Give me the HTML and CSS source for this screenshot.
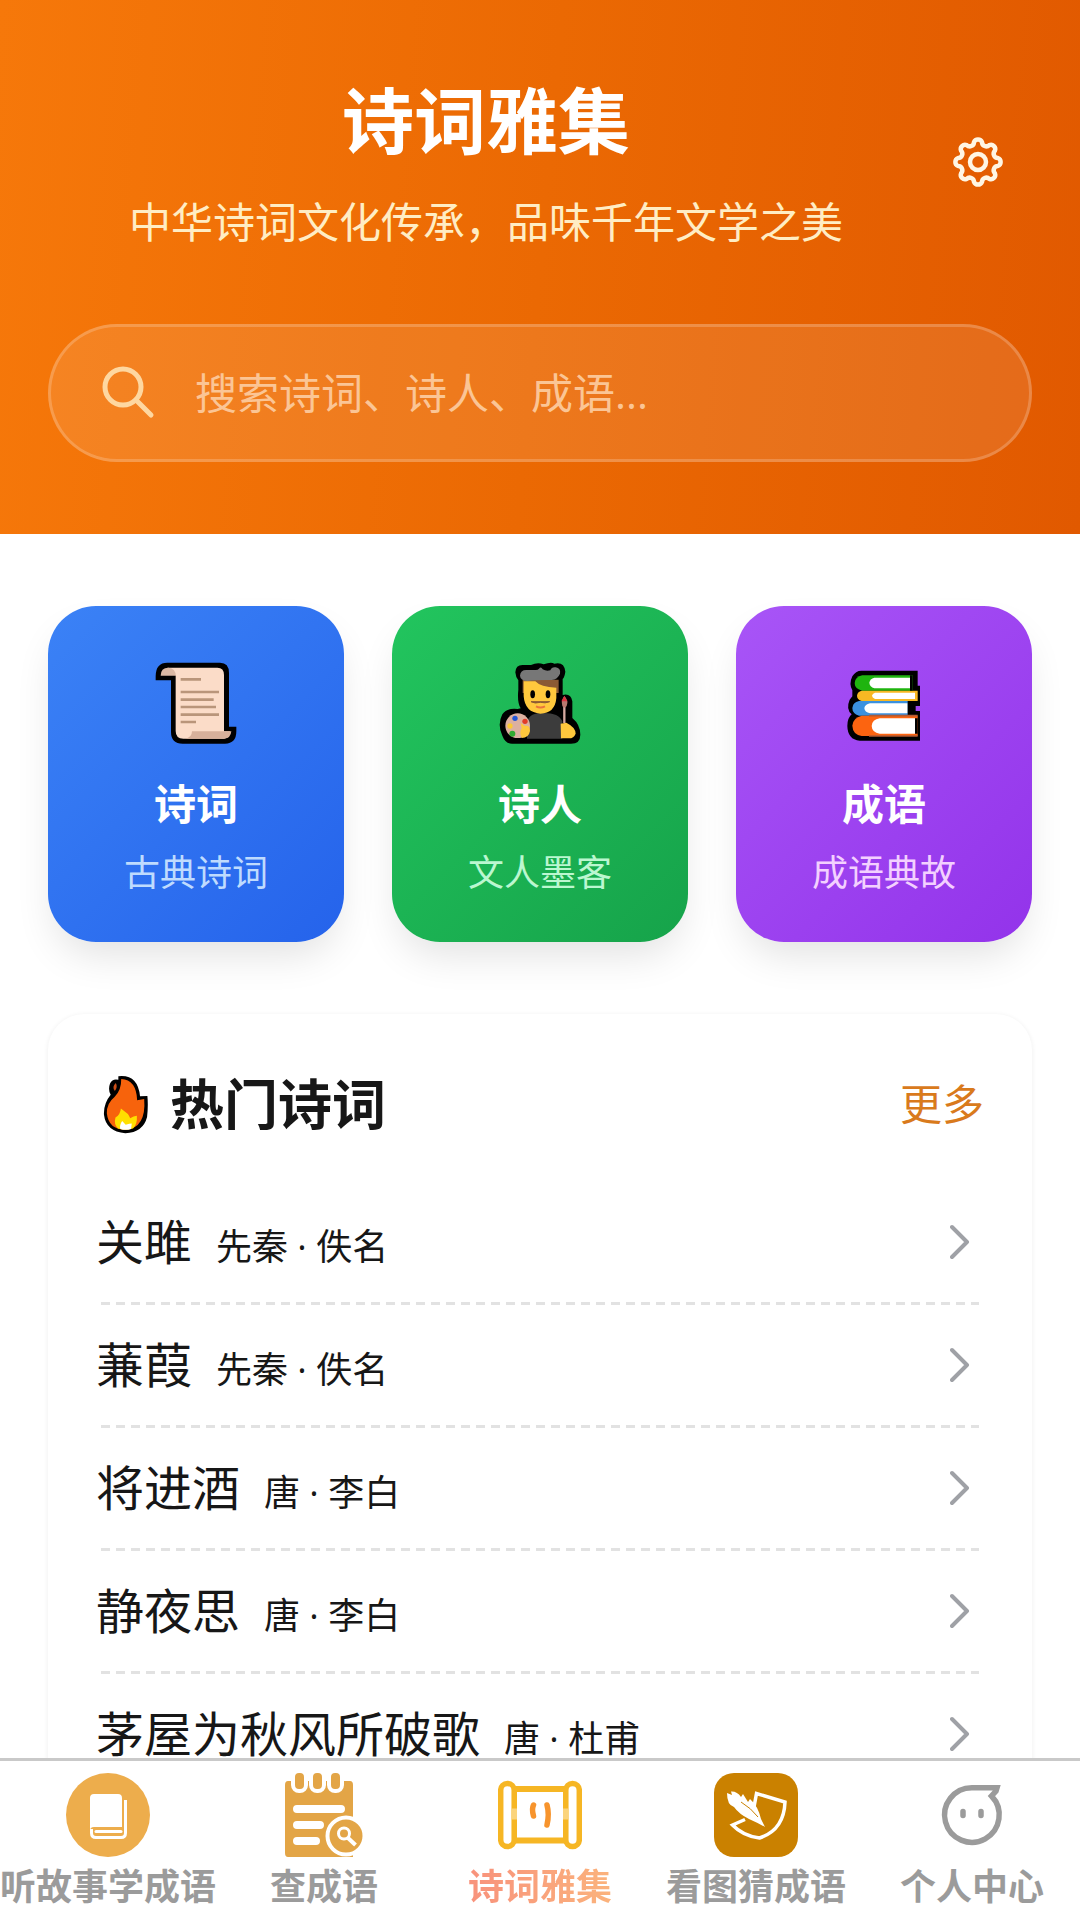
FILE: index.html
```html
<!DOCTYPE html>
<html lang="zh-CN">
<head>
    <meta charset="UTF-8">
    <meta name="viewport" content="width=device-width, initial-scale=1.0">
    <title>诗词雅集</title>
    <link rel="stylesheet" href="styles.css">
</head>
<body>
    <main class="content">
        <header class="header">
            <div class="header-top">
                <div class="header-text">
                    <h1>诗词雅集</h1>
                    <p>中华诗词文化传承，品味千年文学之美</p>
                </div>
                <button type="button" class="settings-btn" aria-label="设置">
                    <svg width="52" height="52" viewBox="-26 -26 52 52" fill="none" stroke="currentColor" stroke-width="4.5" stroke-linejoin="round">
                        <path d="M19.9 -4A4.3 4.3 0 0 1 19.9 4A4.3 4.3 0 0 0 16.9 11.3A4.3 4.3 0 0 1 11.3 16.9A4.3 4.3 0 0 0 4 19.9A4.3 4.3 0 0 1 -4 19.9A4.3 4.3 0 0 0 -11.3 16.9A4.3 4.3 0 0 1 -16.9 11.3A4.3 4.3 0 0 0 -19.9 4A4.3 4.3 0 0 1 -19.9 -4A4.3 4.3 0 0 0 -16.9 -11.3A4.3 4.3 0 0 1 -11.3 -16.9A4.3 4.3 0 0 0 -4 -19.9A4.3 4.3 0 0 1 4 -19.9A4.3 4.3 0 0 0 11.3 -16.9A4.3 4.3 0 0 1 16.9 -11.3A4.3 4.3 0 0 0 19.9 -4Z"/>
                        <circle r="8"/>
                    </svg>
                </button>
            </div>
            <form class="search">
                <svg width="54" height="54" viewBox="0 0 54 54" fill="none" stroke="currentColor" stroke-width="5" stroke-linecap="round">
                    <circle cx="21" cy="21" r="18"/>
                    <path d="M34 34L49 49"/>
                </svg>
                <input type="text" id="keyword" aria-label="搜索" placeholder="搜索诗词、诗人、成语...">
            </form>
        </header>

        <section class="categories">
            <a href="#poems" class="category blue">
                <svg width="82" height="82" viewBox="75 37 246 246">
                    <path d="M77 92V80Q77 39 112 39H270Q297 39 297 70V231H319V245Q319 282 285 282H158Q123 282 123 247V92Z" fill="#000"/>
                    <path d="M112 54H262Q282 54 282 76V245H300Q300 267 282 267H160Q137 267 137 244V78Z" fill="#fbdcc8"/>
                    <path d="M92 78Q92 54 115 54Q137 56 137 78Z" fill="#dcb9a4"/>
                    <path d="M186 245H304Q302 267 282 267H165Q186 264 186 245Z" fill="#d7b09b"/>
                    <path d="M152 89H213M152 127H267M152 150H251M152 172H258M152 195H267M152 217H198" stroke="#b9957a" stroke-width="8"/>
                </svg>
                <h2>诗词</h2>
                <p>古典诗词</p>
            </a>
            <a href="#poets" class="category green">
                <svg width="82" height="82" viewBox="56 37 246 246">
                    <path d="M105 68Q106 44 130 46H152Q172 36 190 44Q212 36 222 42Q252 35 255 66Q253 82 247 88V136Q272 130 276 155L276 205Q300 225 300 255Q300 282 272 282H95Q75 282 66 258Q50 225 66 194Q80 174 112 178L121 176Q110 158 114 120V92Q106 82 105 68Z" fill="#000"/>
                    <path d="M140 267V222Q142 192 180 190Q235 187 246 215V267Z" fill="#3c3c3c"/>
                    <path d="M127 90H235V130H127Z" fill="#8b5a34"/>
                    <path d="M130 95H165Q180 112 228 114V145Q224 191 180 192Q134 189 130 140Z" fill="#ffc83d"/>
                    <path d="M119 78Q120 61 138 61H164Q172 62 176 57Q182 49 187 59Q198 66 210 62Q214 51 226 53Q242 55 239 72Q232 89 214 91Q170 90 142 94Q120 93 119 78Z" fill="#777"/>
                    <ellipse cx="157" cy="134" rx="7" ry="12"/>
                    <ellipse cx="203" cy="134" rx="7" ry="12"/>
                    <path d="M152 156H208Q195 162 180 158Q164 163 152 156Z" fill="#8b5a34" stroke="#8b5a34" stroke-width="3"/>
                    <path d="M167 170Q180 177 194 170" fill="none" stroke="#e9743b" stroke-width="6"/>
                    <circle cx="112" cy="228" r="37" fill="#dcb0a0"/>
                    <circle cx="104" cy="206" r="8" fill="#2457d6"/>
                    <circle cx="134" cy="215" r="8" fill="#e23c28"/>
                    <circle cx="89" cy="229" r="8" fill="#fcc934"/>
                    <circle cx="96" cy="252" r="9" fill="#31a931"/>
                    <path d="M121 220L134 229Q149 226 149 244Q146 264 124 265Q116 250 124 236Z" fill="#ffc83d"/>
                    <path d="M252 160V220" stroke="#d5a9a0" stroke-width="7"/>
                    <path d="M252 139Q241 153 246 169Q252 178 259 169Q266 153 252 139Z" fill="#b87970"/>
                    <path d="M252 139L243 155H261Z" fill="#dd3642"/>
                    <path d="M241 222L258 219Q286 233 286 252Q280 267 264 266H242Z" fill="#ffc83d"/>
                </svg>
                <h2>诗人</h2>
                <p>文人墨客</p>
            </a>
            <a href="#idioms" class="category purple">
                <svg width="82" height="82" viewBox="40 37 246 246">
                    <path d="M95 63H264V108H271V169H258V184H271V273H90Q54 270 53 229Q53 205 66 194Q48 178 60 150L68 140V122Q57 103 68 80Q78 63 95 63Z"/>
                    <path d="M98 77H249V123H98Q75 118 75 100Q76 82 98 77Z" fill="#1fb40f"/>
                    <path d="M134 84H241V116H134Q120 112 119 99Q121 87 134 84Z" fill="#fff"/>
                    <path d="M96 123H264V154H96Q82 150 82 138Q83 126 96 123Z" fill="#f8b823"/>
                    <path d="M136 129H256V148H136Q127 144 127 138Q128 132 136 129Z" fill="#fff"/>
                    <path d="M88 154H241V198H88Q68 192 68 175Q69 158 88 154Z" fill="#3b91df"/>
                    <path d="M121 161H234V191H121Q105 188 104 175Q106 164 121 161Z" fill="#fff"/>
                    <path d="M96 198H264V259H96Q69 254 68 228Q70 204 96 198Z" fill="#fc6410"/>
                    <path d="M241 77H249V123H241ZM234 154H241V198H234ZM256 206H264V252H256Z"/>
                    <path d="M150 206H256V252H150Q127 249 126 229Q127 210 150 206Z" fill="#fff"/>
                    <path d="M118 198H264M118 259H264" stroke="#b25a33" stroke-width="5"/>
                </svg>
                <h2>成语</h2>
                <p>成语典故</p>
            </a>
        </section>

        <section class="hot">
            <div class="hot-header">
                <h2>
                    <svg width="60" height="60" viewBox="168 222 180 188">
                        <path d="M234 229Q295 222 302 292L325 291Q328 320 324 357Q312 405 256 408Q195 402 189 350Q187 315 210 287Q201 271 208 252Q216 235 234 240Z" fill="#000"/>
                        <path d="M243 238Q290 240 293 304L315 300Q322 390 257 397Q203 396 198 345Q197 314 222 294Q244 273 243 238Z" fill="#f7630c"/>
                        <path d="M226 250Q233 263 223 275Q213 262 226 250Z" fill="#c94d17"/>
                        <path d="M242 330L264 347Q269 354 271 361Q282 354 292 353Q294 380 280 393Q257 400 233 393Q219 379 225 358Q240 350 242 330Z" fill="#ffdf00"/>
                        <path d="M246 369L257 381Q270 377 276 377L274 394Q257 400 240 394Q237 382 246 369Z" fill="#fff"/>
                    </svg>
                    热门诗词
                </h2>
                <a href="#more" class="more">更多</a>
            </div>
            <ul class="poem-list">
                <li><a href="#p1"><span class="name">关雎</span><span class="author">先秦 · 佚名</span><svg class="arrow" viewBox="0 0 20 36"><path d="M2 3L17 18L2 33"/></svg></a></li>
                <li><a href="#p2"><span class="name">蒹葭</span><span class="author">先秦 · 佚名</span><svg class="arrow" viewBox="0 0 20 36"><path d="M2 3L17 18L2 33"/></svg></a></li>
                <li><a href="#p3"><span class="name">将进酒</span><span class="author">唐 · 李白</span><svg class="arrow" viewBox="0 0 20 36"><path d="M2 3L17 18L2 33"/></svg></a></li>
                <li><a href="#p4"><span class="name">静夜思</span><span class="author">唐 · 李白</span><svg class="arrow" viewBox="0 0 20 36"><path d="M2 3L17 18L2 33"/></svg></a></li>
                <li><a href="#p5"><span class="name">茅屋为秋风所破歌</span><span class="author">唐 · 杜甫</span><svg class="arrow" viewBox="0 0 20 36"><path d="M2 3L17 18L2 33"/></svg></a></li>
            </ul>
        </section>
    </main>

    <nav class="tabbar">
        <a href="#story">
            <svg width="84" height="84" viewBox="0 0 84 84">
                <circle cx="42" cy="42" r="42" fill="#edad4c"/>
                <path d="M28 21H52Q56 21 56 25V54H28Q24 54 24 58V25Q24 21 28 21Z" fill="#fff"/>
                <path d="M59.5 27V60Q59.5 64.5 55 64.5H30Q25.5 64.5 25.5 60V56" fill="none" stroke="#fff" stroke-width="3"/>
                <path d="M30 58.5H55" stroke="#fff" stroke-width="3" stroke-linecap="round"/>
            </svg>
            <span>听故事学成语</span>
        </a>
        <a href="#lookup">
            <svg width="84" height="84" viewBox="0 0 84 84">
                <path d="M6 8H68Q71 8 71 12V84H6Q3 84 3 80V12Q3 8 6 8Z" fill="#e3a546"/>
                <g fill="#e3a546" stroke="#fff" stroke-width="4">
                    <rect x="11" y="-2" width="13" height="20" rx="6"/>
                    <rect x="29" y="-2" width="13" height="20" rx="6"/>
                    <rect x="47" y="-2" width="13" height="20" rx="6"/>
                    <circle cx="64" cy="63" r="18.5"/>
                </g>
                <path d="M15 36H59M15 52H38M15 68H34" stroke="#fff" stroke-width="8" stroke-linecap="round"/>
                <circle cx="62" cy="60.5" r="5.5" fill="none" stroke="#fff" stroke-width="3"/>
                <path d="M66 65L73.5 72" stroke="#fff" stroke-width="4"/>
            </svg>
            <span>查成语</span>
        </a>
        <a href="#home" class="active">
            <svg width="84" height="84" viewBox="0 0 84 84" fill="none" stroke="#f6b624" stroke-width="5.5">
                <path d="M17 16H67M17 67.5H67" stroke-width="6"/>
                <rect x="2.7" y="10.5" width="13.5" height="63" rx="6.7"/>
                <rect x="67.800" y="10.5" width="13.5" height="63" rx="6.7"/>
                <path d="M17 16V68M67 16V68" stroke-width="4"/>
                <path d="M14 41H19M65 41H70" stroke="#fbd47c" stroke-width="11"/>
                <path d="M35.5 32Q33.5 36 35.5 43M49 32Q51.5 41 49 52" stroke="#f7942d" stroke-linecap="round"/>
            </svg>
            <span>诗词雅集</span>
        </a>
        <a href="#guess">
            <svg width="84" height="84" viewBox="0 0 84 84">
                <rect width="84" height="84" rx="20" fill="#ca8100"/>
                <path d="M40 34L42.5 20.5L71 29Q70 57 45.5 65Q29 63 18.5 52L31 46.5" fill="none" stroke="#fff" stroke-width="3.5"/>
                <path d="M13 20L18 22L17 18.5Q23 18 27 24L29 21L34 29L36 26Q44 33 47 46L51 54Q44 50 35 46Q25 41 20 34Q13 32 13 20Z" fill="#fff"/>
                <path d="M27 29Q37 35 44 44" fill="none" stroke="#ca8100" stroke-width="1"/>
            </svg>
            <span>看图猜成语</span>
        </a>
        <a href="#me">
            <svg width="84" height="84" viewBox="0 0 84 84" fill="none" stroke="#9b9b9b" stroke-width="5.5">
                <path d="M42 14.7H67L66 18L61.5 23A27.3 27.3 0 1 1 42 14.7Z"/>
                <path d="M33 38.5V42.5M51 38.5V42.5" stroke-linecap="round"/>
            </svg>
            <span>个人中心</span>
        </a>
    </nav>
</body>
</html>
```
FILE: styles.css
```css
* {
    box-sizing: border-box;
}
body {
    display: flex;
    flex-direction: column;
    height: 100vh;
    margin: 0;
    font-family: "Open Sans", "Noto Sans CJK SC", sans-serif;
    color: #171717;
    background: #fff;
}
h1, h2, p, ul {
    margin: 0;
    padding: 0;
}
a {
    color: inherit;
    text-decoration: none;
}
svg {
    display: block;
    flex-shrink: 0;
}
.content {
    flex: 1;
    min-height: 0;
    overflow-y: auto;
    scrollbar-width: none;
}

/* header */
.header {
    padding: 72px 48px;
    background: linear-gradient(95deg, #f6780a, #eb6903 50%, #e15900);
}
.header-top {
    display: flex;
    align-items: center;
    margin-bottom: 72px;
}
.header-text {
    flex: 1;
    text-align: center;
}
.header-text h1 {
    margin-bottom: 24px;
    font-size: 72px;
    line-height: 96px;
    color: #fff;
}
.header-text p {
    font-size: 42px;
    line-height: 60px;
    color: #ffedc4;
}
.settings-btn {
    display: flex;
    justify-content: center;
    width: 108px;
    padding: 24px 0;
    border: none;
    background: none;
    color: #fff6e4;
    cursor: pointer;
}
.search {
    display: flex;
    align-items: center;
    gap: 39px;
    height: 138px;
    padding: 0 51px;
    border: 3px solid rgba(255, 255, 255, 0.2);
    border-radius: 69px;
    background: rgba(255, 255, 255, 0.1);
    color: #fed7a0;
}
.search input {
    flex: 1;
    min-width: 0;
    padding: 0;
    border: none;
    outline: none;
    background: none;
    font-family: inherit;
    font-size: 42px;
    line-height: 60px;
    color: #fff;
}
.search input::placeholder {
    color: #fbc595;
}

/* category cards */
.categories {
    display: grid;
    grid-template-columns: repeat(3, 1fr);
    gap: 48px;
    padding: 72px 48px;
}
.category {
    display: flex;
    flex-direction: column;
    align-items: center;
    padding: 56px 24px 42px;
    border-radius: 48px;
    box-shadow: 0 20px 40px -8px rgba(0, 0, 0, 0.12);
}
.category h2 {
    margin: 28px 0 10px;
    font-size: 42px;
    line-height: 64px;
    color: #fff;
}
.category p {
    font-size: 36px;
    line-height: 54px;
}
.blue {
    background: linear-gradient(135deg, #3b82f6, #2563eb);
    color: #bfdbfe;
}
.green {
    background: linear-gradient(135deg, #22c55e, #16a34a);
    color: #bbf7d0;
}
.purple {
    background: linear-gradient(135deg, #a855f7, #9333ea);
    color: #f3d0ff;
}

/* hot poems */
.hot {
    margin: 0 48px 48px;
    padding: 48px;
    border-radius: 36px;
    background: #fff;
    box-shadow: 0 1px 4px 1px rgba(0, 0, 0, 0.05);
}
.hot-header {
    display: flex;
    align-items: center;
    justify-content: space-between;
    margin-bottom: 36px;
}
.hot-header h2 {
    display: flex;
    align-items: center;
    gap: 14px;
    font-size: 54px;
    line-height: 84px;
}
.more {
    font-size: 42px;
    line-height: 60px;
    color: #d97a1c;
}
.poem-list {
    list-style: none;
}
.poem-list a {
    display: flex;
    align-items: baseline;
    gap: 24px;
    height: 123px;
    padding: 24px 14px 27px 0;
    /* long dashes, 9px on and 6px off */
    background: repeating-linear-gradient(90deg, #e2e2e2 0 9px, transparent 9px 15px) center bottom / calc(100% - 10px) 3px no-repeat;
}
.name {
    font-size: 48px;
    line-height: 72px;
}
.author {
    font-size: 36px;
    line-height: 54px;
}
.arrow {
    align-self: center;
    width: 20px;
    height: 36px;
    margin-left: auto;
    fill: none;
    stroke: #9fa1a6;
    stroke-width: 4;
    stroke-linecap: round;
    stroke-linejoin: round;
}

/* bottom tabs */
.tabbar {
    display: grid;
    grid-template-columns: repeat(5, 1fr);
    padding: 12px 0 6px;
    border-top: 3px solid #c9c9c9;
    background: #fff;
}
.tabbar a {
    display: flex;
    flex-direction: column;
    align-items: center;
    gap: 3px;
    font-size: 36px;
    font-weight: bold;
    line-height: 54px;
    color: #9b9b9b;
    white-space: nowrap;
}
.tabbar .active span {
    background: linear-gradient(90deg, #f8927c, #fbb37c);
    background-clip: text;
    -webkit-background-clip: text;
    color: transparent;
}
```
